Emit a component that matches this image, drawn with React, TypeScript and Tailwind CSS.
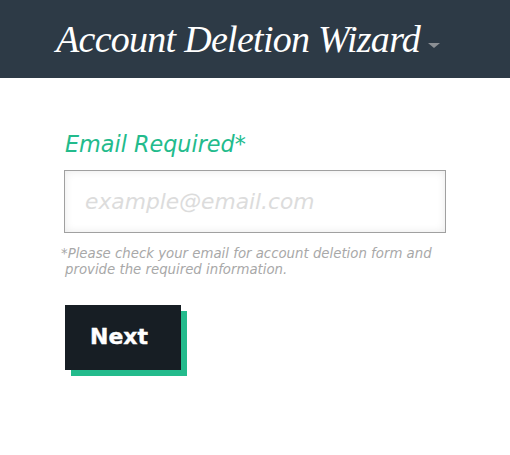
export default function App() {
  return (
    <div className="w-[510px] h-[455px] bg-white overflow-hidden font-['DejaVu_Sans',sans-serif]">
      <header className="h-[78px] bg-[#2d3a46] flex items-center pl-[56px]">
        <h1 className="font-['Liberation_Serif',serif] italic font-normal text-white text-[38px] leading-none tracking-[-0.72px] whitespace-nowrap">Account Deletion Wizard</h1>
        <span className="ml-[8px] mt-[12px] w-0 h-0 border-x-[6px] border-x-transparent border-t-[5px] border-t-[#8b8f94]" />
      </header>
      <main className="pl-[64px] pt-[52px] w-[446px] box-content">
        <label className="block pl-[1px] italic text-[22.3px] leading-[28px] text-[#23bb8c]">Email Required*</label>
        <input
          readOnly
          placeholder="example@email.com"
          className="block mt-[12px] w-[382px] h-[63px] border border-[#a0a0a0] pl-[20px] text-[21.8px] italic bg-white shadow-[inset_0_0_8px_rgba(0,0,0,0.09)] outline-none placeholder:text-[#dcdcdc]"
        />
        <p className="mt-[13px] -ml-[3px] w-[390px] italic text-[13.3px] leading-[16px] text-[#a8a8a8] whitespace-nowrap">
          *Please check your email for account deletion form and<br />
          <span className="pl-[4px]">provide the required information.</span>
        </p>
        <button className="block mt-[27px] ml-[1px] w-[116px] h-[65px] pb-[2px] bg-[#171e24] text-white font-bold text-[22px] [-webkit-text-stroke:0.4px_white] shadow-[6px_6px_0_#23bb8c] text-left pl-[25px]">Next</button>
      </main>
    </div>
  );
}
